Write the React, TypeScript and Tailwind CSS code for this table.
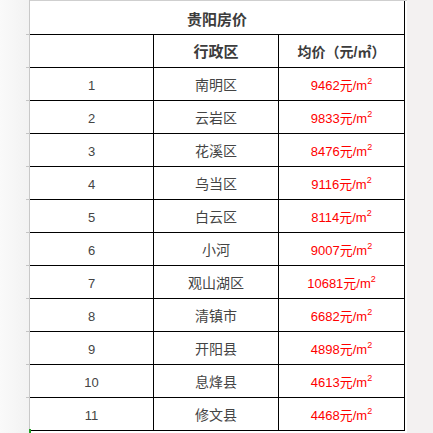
import React from "react";

const ROWS = [
  { no: 1, name: "南明区", price: 9462 },
  { no: 2, name: "云岩区", price: 9833 },
  { no: 3, name: "花溪区", price: 8476 },
  { no: 4, name: "乌当区", price: 9116 },
  { no: 5, name: "白云区", price: 8114 },
  { no: 6, name: "小河", price: 9007 },
  { no: 7, name: "观山湖区", price: 10681 },
  { no: 8, name: "清镇市", price: 6682 },
  { no: 9, name: "开阳县", price: 4898 },
  { no: 10, name: "息烽县", price: 4613 },
  { no: 11, name: "修文县", price: 4468 },
];

const font = { fontFamily: '"Liberation Sans", Arial, "Noto Sans CJK SC", sans-serif' };

const PriceText: React.FC<{ value: number }> = ({ value }) => (
  <span className="text-[13px] text-[#ff0000] leading-none">
    {value}元/m<sup className="text-[9px] -top-[6px]">2</sup>
  </span>
);

const App: React.FC = () => {
  return (
    <div className="w-[433px] h-[433px] overflow-hidden flex bg-[#f3f1f1]" style={font}>
      {/* left gutter */}
      <div className="w-[29px] h-full bg-gradient-to-r from-[#fafafa] to-[#f2f2f2] flex flex-col items-end">
        <div className="h-[34px]" />
        {Array.from({ length: 12 }).map((_, i) => (
          <div key={i} className="h-[33px] w-[3px] border-t border-[#c4c4c4]" />
        ))}
      </div>
      <div className="w-[1px] h-full bg-[#c8c8c8] relative">
        <div className="absolute left-0 top-[429px] w-[2px] h-[4px] bg-[#22a022]" />
      </div>

      {/* sheet */}
      <div className="w-[377px] h-full bg-white border-t border-[#cfcfcf] flex flex-col">
        {/* title */}
        <div className="w-[375px] h-[34px] border-b border-r border-black flex items-center justify-center pt-[6px]">
          <span className="text-[15px] font-bold text-[#3c3c3c]">贵阳房价</span>
        </div>

        {/* header */}
        <div className="w-[375px] h-[33px] border-b border-r border-black grid grid-cols-[124px_125px_125px] text-[#3c3c3c]">
          <div className="border-r border-black" />
          <div className="border-r border-black flex items-center justify-center pt-[3px]">
            <span className="text-[15px] font-bold">行政区</span>
          </div>
          <div className="flex items-center justify-center pt-[2px]">
            <span className="text-[14px] font-bold">均价（元/㎡）</span>
          </div>
        </div>

        {ROWS.map((r) => (
          <div
            key={r.no}
            className="w-[375px] h-[33px] border-b border-r border-black grid grid-cols-[124px_125px_125px] text-[#444]"
          >
            <div className="border-r border-black flex items-center justify-center pt-[3px]">
              <span className="text-[13px]">{r.no}</span>
            </div>
            <div className="border-r border-black flex items-center justify-center pt-[3px]">
              <span className="text-[14px]">{r.name}</span>
            </div>
            <div className="flex items-center justify-center pt-[3px]">
              <PriceText value={r.price} />
            </div>
          </div>
        ))}
      </div>
    </div>
  );
};

export default App;
